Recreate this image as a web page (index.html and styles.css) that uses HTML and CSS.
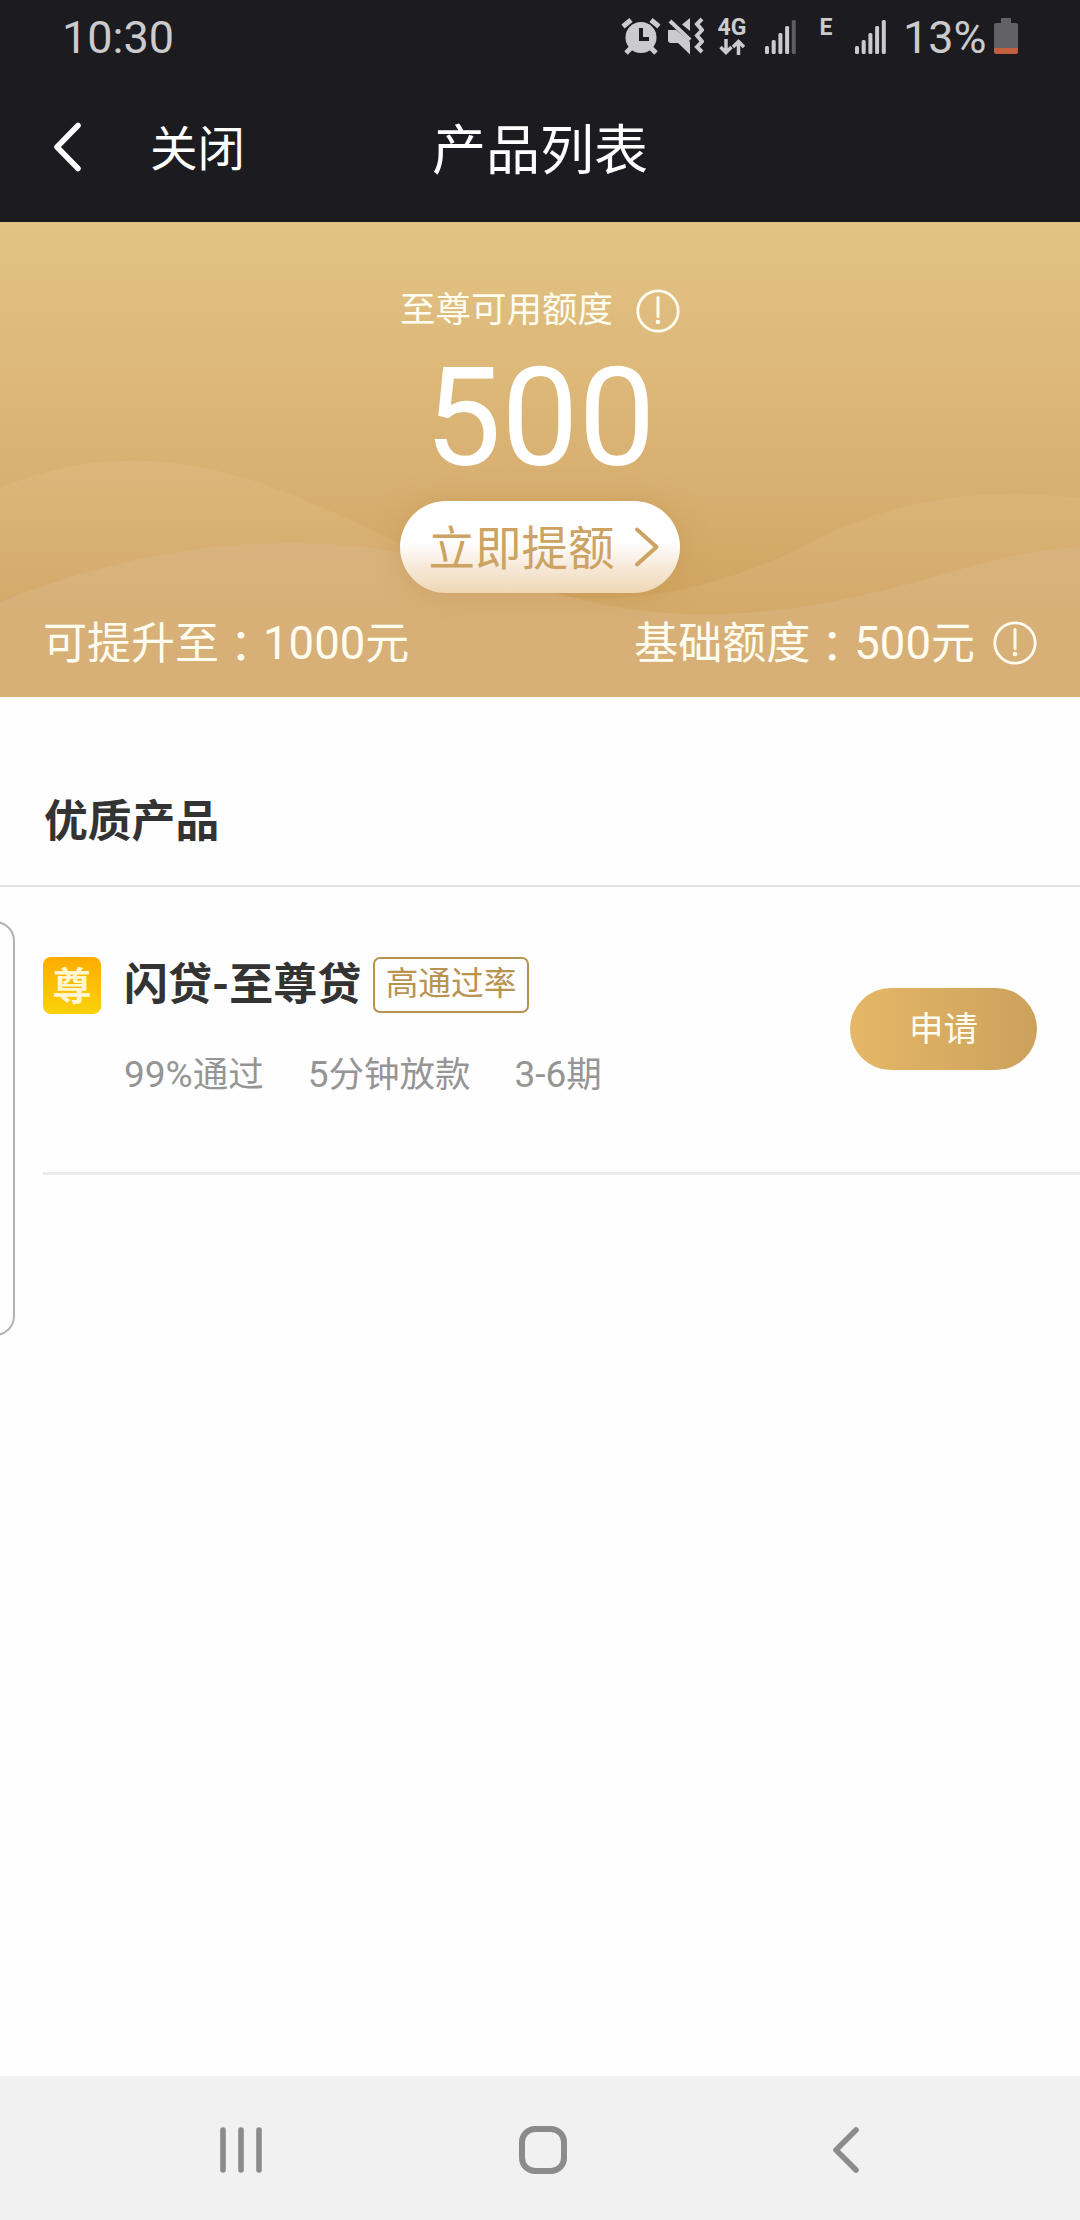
FILE: index.html
```html
<!DOCTYPE html>
<html lang="zh-CN">
<head>
<meta charset="utf-8">
<title>产品列表</title>
<link rel="stylesheet" href="styles.css">
</head>
<body>
<div class="screen">
  <header class="top">
    <div class="status">
      <span class="clock">10:30</span>
      <div class="indicators">
        <svg class="alarm" width="40" height="38" viewBox="0 0 40 38">
          <g fill="none" stroke="#cbcbcd" stroke-width="5"><path d="M2 9.500L10 3M30 3l8 6.500M10 31l-5 5M30 31l5 5"/></g>
          <circle cx="20" cy="20.500" r="15.500" fill="#cbcbcd"/>
          <path d="M20 11v11h8" fill="none" stroke="#1c1b20" stroke-width="4"/>
        </svg>
        <svg class="mute" width="37" height="38" viewBox="0 0 37 38">
          <path d="M1 13h8l14 12v12.500L11 26H4q-3 0-3-3zM23 1v13l-8-6.500z" fill="#cbcbcd"/>
          <path d="M3 4l20 19" stroke="#cbcbcd" stroke-width="4"/>
          <path d="M35 2l-5 5 5 6-5 5.500 5 6-5 5.500 5 5" fill="none" stroke="#cbcbcd" stroke-width="4"/>
        </svg>
        <div class="network">
          <span class="net-label">4G</span>
          <svg width="26" height="16" viewBox="0 0 26 16"><path d="M7 0v13M1.500 8L7 13.500 12.500 8M19.500 16V3M14 8l5.500-5.500L25 8" fill="none" stroke="#cbcbcd" stroke-width="3.500"/></svg>
        </div>
        <svg class="signal" width="32" height="34" viewBox="0 0 32 34" fill="#cbcbcd">
          <rect y="26" width="4" height="8" rx="1.500"/><rect x="6.700" y="20" width="4" height="14" rx="1.500"/><rect x="13.400" y="13" width="4" height="21" rx="1.500"/><rect x="20.100" y="6" width="4" height="28" rx="1.500"/><rect x="26.800" width="4" height="34" rx="1.500" fill="#5e5e61"/>
        </svg>
        <div class="network edge"><span class="net-label">E</span></div>
        <svg class="signal" width="32" height="34" viewBox="0 0 32 34" fill="#cbcbcd">
          <rect y="26" width="4" height="8" rx="1.500"/><rect x="6.700" y="20" width="4" height="14" rx="1.500"/><rect x="13.400" y="13" width="4" height="21" rx="1.500"/><rect x="20.100" y="6" width="4" height="28" rx="1.500"/><rect x="26.800" width="4" height="34" rx="1.500"/>
        </svg>
        <span class="percent">13%</span>
        <svg class="battery" width="24" height="36" viewBox="0 0 24 36">
          <path d="M7 0h10v5h5q2 0 2 2v23H0V7q0-2 2-2h5z" fill="#626165"/>
          <path d="M0 30h24v4q0 2-2 2H2q-2 0-2-2z" fill="#c45e40"/>
        </svg>
      </div>
    </div>
    <nav class="titlebar">
      <div class="left">
        <svg width="30" height="52" viewBox="0 0 30 52"><path d="M25 4.500L4 26l21 21.500" fill="none" stroke="#fff" stroke-width="5.500" stroke-linecap="round" stroke-linejoin="round"/></svg>
        <span class="close">关闭</span>
      </div>
      <h1>产品列表</h1>
      <div></div>
    </nav>
  </header>

  <section class="hero">
    <svg class="waves" width="1080" height="475" viewBox="0 0 1080 475">
      <defs>
        <linearGradient id="back" x1="0" y1="0" x2="0" y2="1"><stop offset="0" stop-color="#e4c08d" stop-opacity=".3"/><stop offset="1" stop-color="#dbb377" stop-opacity=".3"/></linearGradient>
        <linearGradient id="front" x1="0" y1="0" x2="0" y2="1"><stop offset="0" stop-color="#dab588" stop-opacity=".55"/><stop offset="1" stop-color="#d8b177" stop-opacity=".8"/></linearGradient>
      </defs>
      <path d="M0 266C90 228 175 233 260 261C350 291 440 350 540 372C640 388 730 360 800 326C890 277 980 264 1080 276V475H0z" fill="url(#back)"/>
      <path d="M0 380C120 333 210 321 292 321C420 321 500 359 590 380C700 403 790 391 890 367C960 348 1020 327 1080 325V475H0z" fill="url(#front)"/>
    </svg>
    <div class="limit-label">
      <span>至尊可用额度</span>
      <svg width="44" height="44" viewBox="0 0 44 44"><circle cx="22" cy="22" r="20.200" fill="none" stroke="#fffdf0" stroke-width="2.800"/><path d="M22 8.500v19" stroke="#fffdf0" stroke-width="3" stroke-linecap="round"/><circle cx="22" cy="33" r="2.300" fill="#fffdf0"/></svg>
    </div>
    <div class="amount">500</div>
    <button class="raise"><span>立即提额</span><svg width="26" height="42" viewBox="0 0 26 42"><path d="M3 3.500L22.500 21 3 38.500" fill="none" stroke="#cda363" stroke-width="4" stroke-linecap="round" stroke-linejoin="round"/></svg></button>
    <div class="limits">
      <span class="limit">可提升至<span class="colon">：</span><span class="num">1000</span>元</span>
      <span class="limit">基础额度<span class="colon">：</span><span class="num">500</span>元<svg width="44" height="44" viewBox="0 0 44 44"><circle cx="22" cy="22" r="20.200" fill="none" stroke="#fffdf0" stroke-width="2.800"/><path d="M22 8.500v19" stroke="#fffdf0" stroke-width="3" stroke-linecap="round"/><circle cx="22" cy="33" r="2.300" fill="#fffdf0"/></svg></span>
    </div>
  </section>

  <main class="products">
    <h2>优质产品</h2>
    <article class="product">
      <div class="badge">尊</div>
      <div class="info">
        <div class="name-row"><h3>闪贷-至尊贷</h3><span class="tag">高通过率</span></div>
        <div class="facts">
          <span><span class="n">99%</span>通过</span><span><span class="n">5</span>分钟放款</span><span><span class="n">3-6</span>期</span>
        </div>
      </div>
      <button class="apply">申请</button>
    </article>
    <div class="edge-handle"></div>
  </main>

  <footer class="navbar">
    <svg width="44" height="50" viewBox="0 0 44 50"><path d="M4 5v40M22 5v40M40 5v40" stroke="#8b8b8b" stroke-width="5.600" stroke-linecap="round"/></svg>
    <svg width="50" height="50" viewBox="0 0 50 50"><rect x="4" y="4" width="42" height="42" rx="13" fill="none" stroke="#8b8b8b" stroke-width="6"/></svg>
    <svg width="44" height="50" viewBox="0 0 44 50"><path d="M33 5L13 25l20 20" fill="none" stroke="#8b8b8b" stroke-width="5.600" stroke-linecap="round" stroke-linejoin="round"/></svg>
  </footer>
</div>
</body>
</html>
```
FILE: styles.css
```css
* { box-sizing: border-box; }
body {
  margin: 0;
  font-family: Roboto, "Noto Sans CJK SC", sans-serif;
  background: #fefefe;
}
h1, h2, h3 { margin: 0; font-weight: 400; }
svg { display: block; flex: none; }
button { border: 0; padding: 0; font-family: inherit; }
.screen { width: 1080px; height: 2220px; display: flex; flex-direction: column; overflow: hidden; }

.top { height: 222px; flex: none; background: #1c1b20; color: #fff; }
.status { height: 74px; padding: 0 62px 0 62px; display: flex; justify-content: space-between; color: #cbcbcd; }
.clock, .percent { font-size: 45px; line-height: 76px; }
.indicators { display: flex; align-items: flex-start; }
.alarm { margin-top: 17px; }
.mute { margin: 17px 0 0 6px; }
.network { width: 28px; margin: 17px 0 0 14px; display: flex; flex-direction: column; align-items: center; }
.net-label { font-size: 23px; line-height: 21px; font-weight: 700; }
.network svg { margin-top: 1px; }
.signal { margin: 20px 0 0 19px; }
.network.edge { width: 14px; margin-left: 22px; }
.network.edge + .signal { margin-left: 22px; }
.percent { margin-left: 16px; width: 84px; }
.battery { margin: 18px 0 0 7px; }

.titlebar { height: 148px; padding: 0 53px; display: grid; grid-template-columns: 1fr auto 1fr; }
.left { display: flex; align-items: center; padding-bottom: 2px; }
.close { font-size: 47.500px; margin: -8px 0 0 67px; padding-top: 4px; }
.titlebar h1 { font-size: 54px; line-height: 156px; height: 148px; }

.hero {
  position: relative; height: 475px; flex: none; color: #fffdf0;
  background: linear-gradient(#e2c384 0, #d8b071 55%, #cfa460 82%, #cfa566 100%);
  display: flex; flex-direction: column; align-items: center;
}
.waves { position: absolute; left: 0; top: 0; }
.hero > div, .hero > button { position: relative; }
.limit-label { height: 44px; margin-top: 67px; display: flex; align-items: center; gap: 23px; font-size: 35.500px; }
.limit-label span { line-height: 40px; margin-top: -2px; }
.amount { font-size: 137px; line-height: 160px; height: 160px; margin: 5px 0 0 0; color: #fff; }
.raise {
  width: 280px; height: 92px; margin-top: 3px; border-radius: 46px;
  background: linear-gradient(#fff 45%, #f7eadb 70%, #efd7b6);
  box-shadow: 0 2px 30px rgba(190, 142, 70, .4);
  display: flex; align-items: center; justify-content: center; gap: 19px;
  color: #cda363; font-size: 46.500px; padding-left: 8px;
}
.raise span { margin-top: -6px; }
.limits { width: 100%; padding: 0 43px 0 43px; margin-top: 18px; display: flex; justify-content: space-between; }
.limit { display: flex; align-items: center; height: 66px; line-height: 68px; font-size: 44px; }
.colon { font-family: "Noto Sans CJK TC", sans-serif; }
.num { font-size: 45.500px; line-height: 66px; }
.limit svg { margin: -2px 0 0 18px; }

.products { position: relative; flex: 1; }
.products h2 { height: 190px; padding: 90px 44px 0; border-bottom: 2px solid #e1e1e1; font-size: 43.800px; line-height: 70px; font-weight: 700; color: #333; }
.product { height: 288px; margin-left: 43px; padding: 70px 43px 0 0; border-bottom: 3px solid #ebebeb; display: flex; align-items: flex-start; }
.badge { width: 58px; height: 57px; border-radius: 8px; background: linear-gradient(#ffac00, #fad20a); color: #fff6d0; font-size: 39px; line-height: 60px; font-weight: 700; text-align: center; }
.info { margin-left: 23px; flex: 1; }
.name-row { display: flex; align-items: flex-start; height: 56px; }
.name-row h3 { font-size: 44px; line-height: 56px; font-weight: 700; color: #333; width: 249px; white-space: nowrap; }
.tag { width: 156px; height: 56px; border: 2px solid #b89350; border-radius: 7px; color: #b89350; font-size: 32.700px; line-height: 51px; text-align: center; white-space: nowrap; }
.facts { display: flex; gap: 44px; margin-top: 39px; font-size: 35.500px; line-height: 46px; color: #959595; }
.n { font-size: 37px; }
.apply { width: 187px; height: 82px; margin-top: 31px; border-radius: 42px; background: linear-gradient(90deg, #e5b767, #cba15c); color: #fffdf0; font-size: 34.500px; line-height: 82px; }

.edge-handle { position: absolute; left: -40px; top: 224px; width: 55px; height: 415px; border: 2px solid #b3b3b3; border-radius: 20px; }

.navbar { height: 144px; flex: none; background: #f1f1f1; display: grid; grid-template-columns: repeat(3, 302px); justify-content: center; justify-items: center; align-items: center; padding: 4px 0 0 6px; }
```
